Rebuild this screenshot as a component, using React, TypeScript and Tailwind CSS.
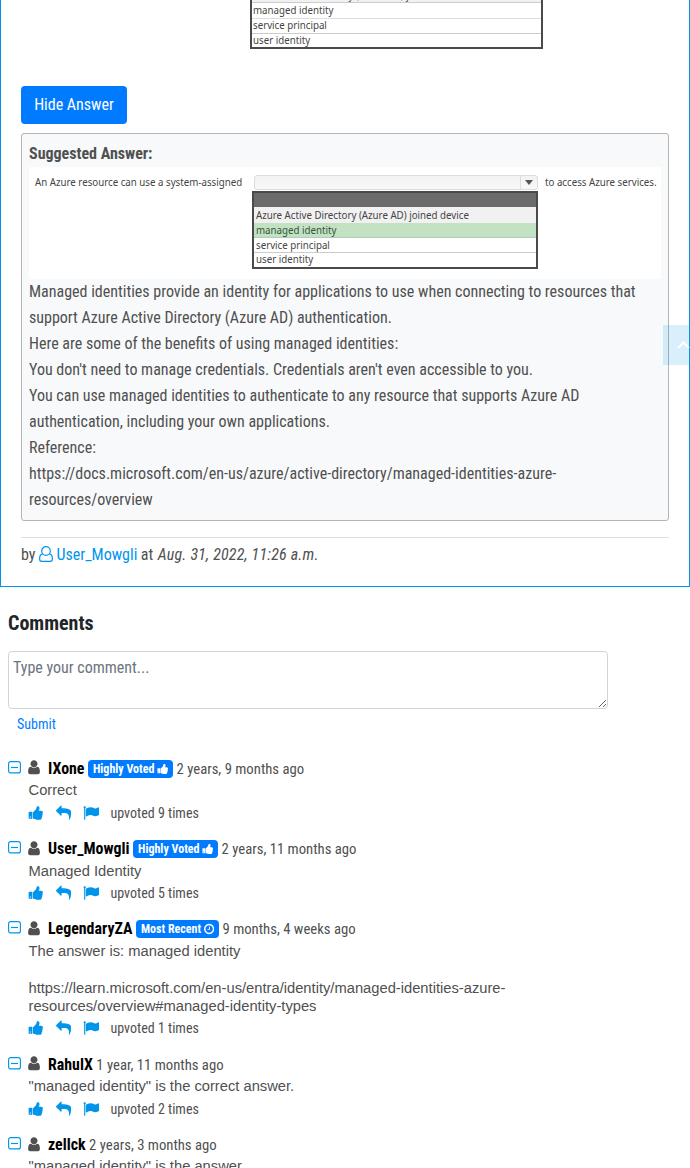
import React from "react";

const ICONS = {
  thumb: {
    box: "0 0 1664 1792",
    path: "M320 1344q0-26-19-45t-45-19q-27 0-45.500 19t-18.500 45q0 27 18.500 45.500t45.500 18.500q26 0 45-18.500t19-45.500zm160-512v640q0 26-19 45t-45 19h-288q-26 0-45-19t-19-45v-640q0-26 19-45t45-19h288q26 0 45 19t19 45zm1184 0q0 86-55 149 15 44 15 76 3 76-43 137 17 56 0 117-15 57-54 94 9 112-49 181-64 76-197 78h-129q-66 0-144-15.500t-121.500-29-120.500-39.500q-123-43-158-44-26-1-45-19.500t-19-44.500v-641q0-25 18-43.500t43-20.500q24-2 76-59t101-121q68-87 101-120 18-18 31-48t17.500-48.500 13.500-60.500q7-39 12.500-61t19.500-52 34-50q19-19 45-19 46 0 82.500 10.500t60 26 40 40.500 24 45 12 50 5 45 .5 39q0 38-9.500 76t-19 60-27.500 56q-3 6-10 18t-11 22-8 24h277q78 0 135 57t57 135z",
  },
  clock: {
    box: "128 0 1536 1792",
    path: "M1024 544v448q0 14-9 23t-23 9h-320q-14 0-23-9t-9-23v-64q0-14 9-23t23-9h224v-352q0-14 9-23t23-9h64q14 0 23 9t9 23zm416 352q0-148-73-273t-198-198-273-73-273 73-198 198-73 273 73 273 198 198 273 73 273-73 198-198 73-273zm224 0q0 209-103 385.500t-279.500 279.500-385.500 103-385.500-103-279.500-279.500-103-385.500 103-385.500 279.500-279.500 385.500-103 385.500 103 279.500 279.500 103 385.500z",
  },
  reply: {
    box: "0 0 1792 1792",
    path: "M1792 1120q0 166-127 451-3 7-10.500 24t-13.500 30-13 22q-12 17-28 17-15 0-23.500-10t-8.500-25q0-9 2.500-26.500t2.500-23.500q5-68 5-123 0-112-19.500-200.500t-54-153.500-89-105.500-120-65.500-152-36.500-175.500-10.500h-224v256q0 26-19 45t-45 19-45-19l-512-512q-19-19-19-45t19-45l512-512q19-19 45-19t45 19 19 45v256h224q713 0 875 403 53 134 53 333z",
  },
  user: {
    box: "256 0 1280 1792",
    path: "M1536 1399q0 109-62.500 187t-150.500 78h-854q-88 0-150.500-78t-62.500-187q0-85 8.500-160.500t31.500-152 58.500-131 94-89 134.500-34.500q131 128 313 128t313-128q76 0 134.500 34.500t94 89 58.500 131 31.500 152 8.500 160.500zm-256-887q0 159-112.500 271.500t-271.500 112.500-271.500-112.500-112.500-271.500 112.500-271.500 271.500-112.500 271.500 112.500 112.500 271.500z",
  },
  flag: {
    box: "0 0 1792 1792",
    path: "M320 256q0 72-64 110v1266q0 13-9.500 22.500t-22.500 9.500h-64q-13 0-22.500-9.500t-9.500-22.500v-1266q-64-38-64-110 0-53 37.500-90.500t90.500-37.500 90.500 37.500 37.500 90.500zm1472 64v763q0 25-12.500 38.500t-39.500 27.500q-215 116-369 116-61 0-123.500-22t-108.500-48-115.500-48-142.500-22q-192 0-464 146-17 9-33 9-26 0-45-19t-19-45v-742q0-32 31-55 21-14 79-43 236-120 421-120 107 0 200 29t219 88q38 19 88 19 54 0 117.500-21t110-47 88-47 54.500-21q26 0 45 19t19 45z",
  },
};

function Icon({ name, className }: { name: keyof typeof ICONS; className: string }) {
  return (
    <svg viewBox={ICONS[name].box} className={`shrink-0 ${className}`} fill="currentColor">
      <path d={ICONS[name].path} />
    </svg>
  );
}

function MinusBox() {
  return (
    <svg viewBox="0 0 13 13" className="h-[13px] w-[13px] shrink-0 text-[#0095eb]" fill="none" stroke="currentColor" strokeWidth="1.150">
      <rect x="0.600" y="0.600" width="11.800" height="11.300" rx="2" />
      <path d="M3 6.500h7" />
    </svg>
  );
}

const OPTIONS = ["managed identity", "service principal", "user identity"];

function Narrow({ children }: { children: React.ReactNode }) {
  return (
    <span className="inline-block origin-left -translate-y-[0.700px] scale-x-[0.845] whitespace-nowrap text-[11.500px] leading-[13px]">
      {children}
    </span>
  );
}

function Question() {
  return (
    <div className="ml-[229px] h-[49px] w-[293px] overflow-hidden border-x-2 border-b-2 border-[#4a4a4a] bg-white font-['Noto_Sans',sans-serif] text-[#444]">
      <div className="flex h-[3px] items-end overflow-hidden border-b border-[#ccc] bg-[#f1f1f1] pl-[1px]">
        <Narrow>Azure Active Directory (Azure AD) joined device</Narrow>
      </div>
      <div className="flex h-[16px] items-center border-b border-[#ddd] pb-px pl-[1px]">
        <Narrow>{OPTIONS[0]}</Narrow>
      </div>
      <div className="flex h-[15px] items-center border-b border-[#ccc] pb-px pl-[1px]">
        <Narrow>{OPTIONS[1]}</Narrow>
      </div>
      <div className="flex h-[13px] items-center pb-px pl-[1px]">
        <Narrow>{OPTIONS[2]}</Narrow>
      </div>
    </div>
  );
}

function AnswerPicture() {
  return (
    <div className="flex h-[112px] w-[632px] bg-white font-['Noto_Sans',sans-serif] text-[#444]">
      <div className="flex h-[31px] w-[224px] shrink-0 items-center pl-[6px]">
        <Narrow>An Azure resource can use a system-assigned</Narrow>
      </div>
      <div className="w-[285px] shrink-0 pt-[8px]">
        <div className="ml-px flex h-[15px] w-[284px] rounded-[3px] border border-[#ddd] bg-gradient-to-b from-[#f2f2f2] to-[#f8f8f8]">
          <div className="grow" />
          <div className="flex w-[17px] items-center justify-center border-l border-[#ddd]">
            <svg viewBox="0 0 8 5" className="h-[5px] w-[8px]" fill="#555">
              <path d="M0 0h8l-4 5z" />
            </svg>
          </div>
        </div>
        <div className="-ml-px mt-px h-[78px] w-[286px] border-2 border-[#4a4a4a]">
          <div className="h-[14px] bg-[#6b6b6b]" />
          <div className="flex h-[16px] items-center bg-[#f1f1f1] pl-[1.500px]">
            <Narrow>Azure Active Directory (Azure AD) joined device</Narrow>
          </div>
          <div className="flex h-[15px] items-center border-b border-[#b4cbb4] bg-[#c3e1c3] pl-[1.500px] text-[#31563a]">
            <Narrow>{OPTIONS[0]}</Narrow>
          </div>
          <div className="flex h-[15px] items-center border-b border-[#ccc] pl-[1.500px]">
            <Narrow>{OPTIONS[1]}</Narrow>
          </div>
          <div className="flex h-[13px] items-center pl-[1.500px]">
            <Narrow>{OPTIONS[2]}</Narrow>
          </div>
        </div>
      </div>
      <div className="flex h-[31px] w-[123px] items-center pl-[7px]">
        <Narrow>to access Azure services.</Narrow>
      </div>
    </div>
  );
}

type Comment = { name: string; badge?: "voted" | "recent"; when: string; body: string[]; votes: number };

const COMMENTS: Comment[] = [
  { name: "IXone", badge: "voted", when: "2 years, 9 months ago", body: ["Correct"], votes: 9 },
  { name: "User_Mowgli", badge: "voted", when: "2 years, 11 months ago", body: ["Managed Identity"], votes: 5 },
  {
    name: "LegendaryZA",
    badge: "recent",
    when: "9 months, 4 weeks ago",
    body: [
      "The answer is: managed identity",
      "",
      "https://learn.microsoft.com/en-us/entra/identity/managed-identities-azure-",
      "resources/overview#managed-identity-types",
    ],
    votes: 1,
  },
  { name: "RahulX", when: "1 year, 11 months ago", body: ['"managed identity" is the correct answer.'], votes: 2 },
  { name: "zellck", when: "2 years, 3 months ago", body: ['"managed identity" is the answer.'], votes: 1 },
];

function Badge({ kind }: { kind: "voted" | "recent" }) {
  return (
    <span className="ml-[3.500px] flex h-[18px] items-center rounded-[4px] bg-[#007bff] px-[5px] text-[12px] font-bold leading-none text-white">
      {kind === "voted" ? "Highly Voted" : "Most Recent"}
      {kind === "voted" ? (
        <Icon name="thumb" className="ml-[2.500px] h-[12px] w-[11.100px]" />
      ) : (
        <Icon name="clock" className="ml-[2.500px] h-[12px] w-[10.300px]" />
      )}
    </span>
  );
}

function CommentItem({ c }: { c: Comment }) {
  return (
    <div className="pb-[15.900px]">
      <div className="flex h-[22px] items-center whitespace-nowrap">
        <div className="-mt-[3.200px] flex">
          <MinusBox />
        </div>
        <Icon name="user" className="-mt-[2.200px] ml-[7.300px] h-[16.500px] w-[12px] text-[#505050]" />
        <span className="ml-[7.700px] text-[15.900px] font-bold text-black">{c.name}</span>
        {c.badge && <Badge kind={c.badge} />}
        <span className="ml-[3.500px] text-[14.720px]">{c.when}</span>
      </div>
      <div className="ml-[20.500px] pt-[1.550px] font-['Liberation_Sans',Arial,sans-serif] text-[14.720px] leading-[18.400px]">
        {c.body.map((line, i) => (
          <div key={i} className="h-[18.400px] whitespace-nowrap">
            {line}
          </div>
        ))}
      </div>
      <div className="ml-[20px] flex h-[22.450px] items-center pt-[4.500px] text-[#0095eb]">
        <Icon name="thumb" className="-mt-px h-[16px] w-[15px]" />
        <Icon name="reply" className="-mt-px ml-[11.500px] h-[16px] w-[16px]" />
        <Icon name="flag" className="-mt-px ml-[12px] h-[16px] w-[16px]" />
        <span className="ml-[12px] text-[14px] text-[#505050]">upvoted {c.votes} times</span>
      </div>
    </div>
  );
}

export default function App() {
  return (
    <div className="relative h-[1168px] w-[690px] overflow-hidden bg-white font-['Roboto_Condensed','Roboto',sans-serif] text-[16px] text-[#505050] [font-stretch:75%]">
      <div className="h-[587px] border-x border-b border-[#0095eb] px-5">
        <Question />
        <button className="mt-[37px] block h-[38px] w-[106px] rounded-[4px] bg-[#007bff] text-center text-white">
          Hide Answer
        </button>
        <div className="mt-[9px] h-[388px] rounded-[3px] border border-[#b4b4b4] bg-[#f8f9fa] p-[7px] leading-[26px]">
          <div className="h-[26px] font-bold">Suggested Answer:</div>
          <AnswerPicture />
          <div className="whitespace-nowrap">
            <p>Managed identities provide an identity for applications to use when connecting to resources that</p>
            <p>support Azure Active Directory (Azure AD) authentication.</p>
            <p>Here are some of the benefits of using managed identities:</p>
            <p>You don't need to manage credentials. Credentials aren't even accessible to you.</p>
            <p>You can use managed identities to authenticate to any resource that supports Azure AD</p>
            <p>authentication, including your own applications.</p>
            <p>Reference:</p>
            <p>https://docs.microsoft.com/en-us/azure/active-directory/managed-identities-azure-</p>
            <p>resources/overview</p>
          </div>
        </div>
        <div className="mt-4 flex border-t border-[#dfdfdf] pt-[4px] leading-[26px]">
          <span>by</span>
          <svg viewBox="0 0 14 16" className="ml-[4px] mt-[4px] h-[16px] w-[14px] text-[#0095eb]" fill="none" stroke="currentColor" strokeWidth="1.200">
            <circle cx="7" cy="5" r="4.300" />
            <path d="M3.500 7.800C1.500 8.300.6 10.200.6 12.800c0 1.500.9 2.600 2.200 2.600h8.400c1.300 0 2.200-1.100 2.200-2.600 0-2.600-.9-4.500-2.900-5" />
          </svg>
          <span className="ml-[3px] text-[#0095eb]">User_Mowgli</span>
          <span className="ml-[3.500px]">at</span>
          <i className="ml-[4.500px] tracking-[0.180px]">Aug. 31, 2022, 11:26 a.m.</i>
        </div>
      </div>
      <div className="px-2">
        <h2 className="mt-[24px] text-[20px] font-bold leading-[24px] text-[#212529]">Comments</h2>
        <textarea
          className="mt-[16px] block h-[58px] w-[600px] rounded-[4px] border border-[#ced4da] px-[4px] py-[4px] leading-[24px] placeholder:text-[#6c757d]"
          placeholder="Type your comment..."
        />
        <div className="ml-[9px] mt-[5px] text-[14px] leading-[21px] text-[#007bff]">Submit</div>
        <div className="mt-[22.700px]">
          {COMMENTS.map((c) => (
            <CommentItem key={c.name} c={c} />
          ))}
        </div>
      </div>
      <div className="absolute right-0 top-[325px] flex h-[40px] w-[27px] items-center overflow-hidden bg-[#0095eb]/15 pl-[14px]">
        <svg viewBox="0 0 13 8" className="h-[8px] w-[13px] shrink-0" fill="none" stroke="#fff" strokeWidth="2">
          <path d="M1 7l5.500-5.500L12 7" />
        </svg>
      </div>
    </div>
  );
}
